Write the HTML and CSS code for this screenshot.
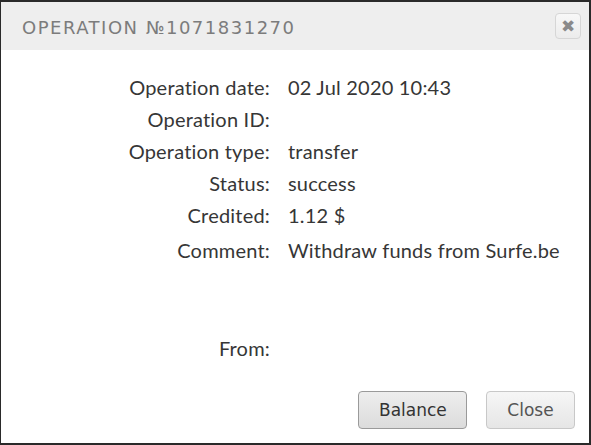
FILE: index.html
```html
<!DOCTYPE html>
<html>
  <head>
    <title>Operation</title>
    <link rel="stylesheet" href="styles.css">
  </head>
  <body>
    <div class="dialog">
      <div class="dialog-header">
        <span class="dialog-title">Operation №1071831270</span>
        <button class="close-x" title="Close">&#10006;</button>
      </div>
      <div class="dialog-body">
        <table class="details">
          <tr><th>Operation date:</th><td>02 Jul 2020 10:43</td></tr>
          <tr><th>Operation ID:</th><td></td></tr>
          <tr><th>Operation type:</th><td>transfer</td></tr>
          <tr><th>Status:</th><td>success</td></tr>
          <tr><th>Credited:</th><td>1.12 $</td></tr>
          <tr class="comment"><th>Comment:</th><td>Withdraw funds from Surfe.be</td></tr>
          <tr class="spacer"><th></th><td></td></tr>
          <tr><th>From:</th><td></td></tr>
        </table>
      </div>
      <div class="dialog-buttons">
        <button class="btn btn-main">Balance</button>
        <button class="btn">Close</button>
      </div>
    </div>
  </body>
</html>
```
FILE: styles.css
```css
html, body {
  margin: 0;
  padding: 0;
  background: #ffffff;
}

.dialog {
  width: 591px;
  height: 445px;
  box-sizing: border-box;
  border: 2px solid #2a2a2a;
  border-left-width: 1px;
  background: #ffffff;
  display: flex;
  flex-direction: column;
}

.dialog-header {
  height: 48px;
  background: #eeeeee;
  display: flex;
  align-items: center;
  justify-content: space-between;
  padding: 0 8px 0 21px;
}

.dialog-title {
  font: normal 18px "DejaVu Sans", sans-serif;
  text-transform: uppercase;
  letter-spacing: 1.5px;
  color: #7c7c7c;
  padding-top: 2px;
}

.close-x {
  width: 26px;
  height: 26px;
  padding: 0;
  border: 1px solid #d6d6d6;
  border-radius: 4px;
  background: linear-gradient(to bottom, #f8f8f8 0%, #ececec 100%);
  color: #8a8a8a;
  font: bold 17px "DejaVu Sans", sans-serif;
  line-height: 24px;
  text-align: center;
}

.dialog-body {
  flex: 1;
  padding: 21px 0 0 0;
}

.details {
  border-collapse: collapse;
  margin-left: 119px;
  font: normal 20px Lato, sans-serif;
  letter-spacing: 0.2px;
  color: #363636;
}

.details th {
  width: 150px;
  font-weight: normal;
  text-align: right;
  padding: 0 18px 0 0;
  height: 32px;
  white-space: nowrap;
}

.details td {
  padding: 0;
  height: 32px;
  white-space: nowrap;
}

.details .comment th,
.details .comment td {
  padding-top: 3px;
}

.details .spacer th,
.details .spacer td {
  height: 66px;
}

.dialog-buttons {
  display: flex;
  justify-content: flex-end;
  gap: 19px;
  padding: 0 14px 14px 0;
}

.btn {
  height: 38px;
  padding: 0 20px;
  font: normal 17px "DejaVu Sans", sans-serif;
  color: #333333;
  border: 1px solid #c8c8c8;
  border-radius: 4px;
  background: linear-gradient(to bottom, #f6f6f6 0%, #e6e6e6 100%);
}

.btn-main {
  width: 109px;
  border-color: #9a9a9a;
  background: linear-gradient(to bottom, #eeeeee 0%, #dcdcdc 100%);
}

.btn:last-child {
  width: 89px;
  color: #555555;
}
```
